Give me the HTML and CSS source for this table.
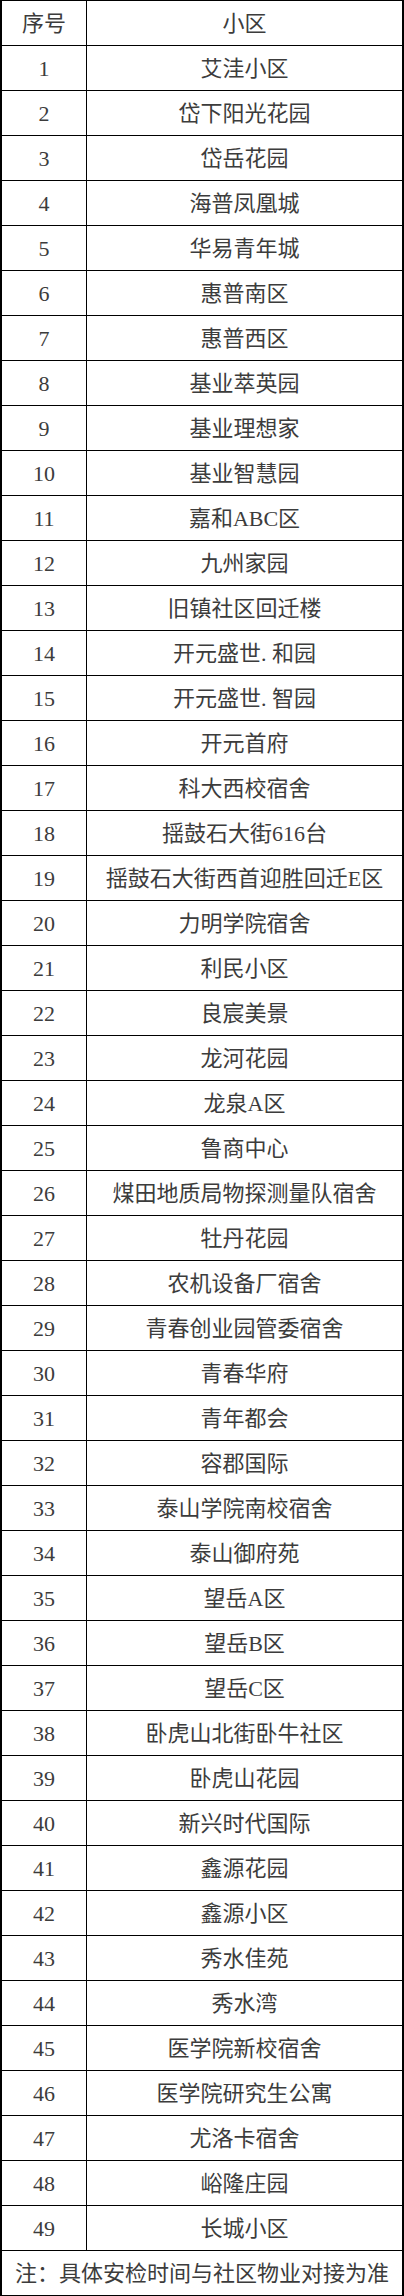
FILE: index.html
```html
<!DOCTYPE html>
<html lang="zh-CN">
<head>
<meta charset="utf-8">
<title>小区安检</title>
<link rel="stylesheet" href="styles.css">
</head>
<body>
<div class="sheet">
  <div class="row head"><div class="num">序号</div><div class="name">小区</div></div>
  <div class="row"><div class="num">1</div><div class="name">艾洼小区</div></div>
  <div class="row"><div class="num">2</div><div class="name">岱下阳光花园</div></div>
  <div class="row"><div class="num">3</div><div class="name">岱岳花园</div></div>
  <div class="row"><div class="num">4</div><div class="name">海普凤凰城</div></div>
  <div class="row"><div class="num">5</div><div class="name">华易青年城</div></div>
  <div class="row"><div class="num">6</div><div class="name">惠普南区</div></div>
  <div class="row"><div class="num">7</div><div class="name">惠普西区</div></div>
  <div class="row"><div class="num">8</div><div class="name">基业萃英园</div></div>
  <div class="row"><div class="num">9</div><div class="name">基业理想家</div></div>
  <div class="row"><div class="num">10</div><div class="name">基业智慧园</div></div>
  <div class="row"><div class="num">11</div><div class="name">嘉和ABC区</div></div>
  <div class="row"><div class="num">12</div><div class="name">九州家园</div></div>
  <div class="row"><div class="num">13</div><div class="name">旧镇社区回迁楼</div></div>
  <div class="row"><div class="num">14</div><div class="name">开元盛世. 和园</div></div>
  <div class="row"><div class="num">15</div><div class="name">开元盛世. 智园</div></div>
  <div class="row"><div class="num">16</div><div class="name">开元首府</div></div>
  <div class="row"><div class="num">17</div><div class="name">科大西校宿舍</div></div>
  <div class="row"><div class="num">18</div><div class="name">揺鼓石大街616台</div></div>
  <div class="row"><div class="num">19</div><div class="name">揺鼓石大街西首迎胜回迁E区</div></div>
  <div class="row"><div class="num">20</div><div class="name">力明学院宿舍</div></div>
  <div class="row"><div class="num">21</div><div class="name">利民小区</div></div>
  <div class="row"><div class="num">22</div><div class="name">良宸美景</div></div>
  <div class="row"><div class="num">23</div><div class="name">龙河花园</div></div>
  <div class="row"><div class="num">24</div><div class="name">龙泉A区</div></div>
  <div class="row"><div class="num">25</div><div class="name">鲁商中心</div></div>
  <div class="row"><div class="num">26</div><div class="name">煤田地质局物探测量队宿舍</div></div>
  <div class="row"><div class="num">27</div><div class="name">牡丹花园</div></div>
  <div class="row"><div class="num">28</div><div class="name">农机设备厂宿舍</div></div>
  <div class="row"><div class="num">29</div><div class="name">青春创业园管委宿舍</div></div>
  <div class="row"><div class="num">30</div><div class="name">青春华府</div></div>
  <div class="row"><div class="num">31</div><div class="name">青年都会</div></div>
  <div class="row"><div class="num">32</div><div class="name">容郡国际</div></div>
  <div class="row"><div class="num">33</div><div class="name">泰山学院南校宿舍</div></div>
  <div class="row"><div class="num">34</div><div class="name">泰山御府苑</div></div>
  <div class="row"><div class="num">35</div><div class="name">望岳A区</div></div>
  <div class="row"><div class="num">36</div><div class="name">望岳B区</div></div>
  <div class="row"><div class="num">37</div><div class="name">望岳C区</div></div>
  <div class="row"><div class="num">38</div><div class="name">卧虎山北街卧牛社区</div></div>
  <div class="row"><div class="num">39</div><div class="name">卧虎山花园</div></div>
  <div class="row"><div class="num">40</div><div class="name">新兴时代国际</div></div>
  <div class="row"><div class="num">41</div><div class="name">鑫源花园</div></div>
  <div class="row"><div class="num">42</div><div class="name">鑫源小区</div></div>
  <div class="row"><div class="num">43</div><div class="name">秀水佳苑</div></div>
  <div class="row"><div class="num">44</div><div class="name">秀水湾</div></div>
  <div class="row"><div class="num">45</div><div class="name">医学院新校宿舍</div></div>
  <div class="row"><div class="num">46</div><div class="name">医学院研究生公寓</div></div>
  <div class="row"><div class="num">47</div><div class="name">尤洛卡宿舍</div></div>
  <div class="row"><div class="num">48</div><div class="name">峪隆庄园</div></div>
  <div class="row"><div class="num">49</div><div class="name">长城小区</div></div>
  <div class="row note"><div class="name">注：具体安检时间与社区物业对接为准</div></div>
</div>
</body>
</html>
```

FILE: styles.css
```css
html, body {
  margin: 0;
  padding: 0;
  background: #fff;
}

.sheet {
  width: 404px;
  box-sizing: border-box;
  border-left: 2px solid #000;
  border-right: 2px solid #000;
  border-top: 1px solid #000;
  font-family: "Liberation Serif", "Noto Sans CJK SC", serif;
  font-size: 22px;
  color: #3c3c3c;
}

.row {
  display: grid;
  grid-template-columns: 85px 1fr;
  height: 45px;
  box-sizing: border-box;
  border-bottom: 1px solid #000;
}

.num,
.name {
  display: flex;
  align-items: center;
  justify-content: center;
  padding-top: 2px;
  white-space: nowrap;
  line-height: 1;
}

.num {
  border-right: 1px solid #000;
}

.note {
  grid-template-columns: 1fr;
}
```
